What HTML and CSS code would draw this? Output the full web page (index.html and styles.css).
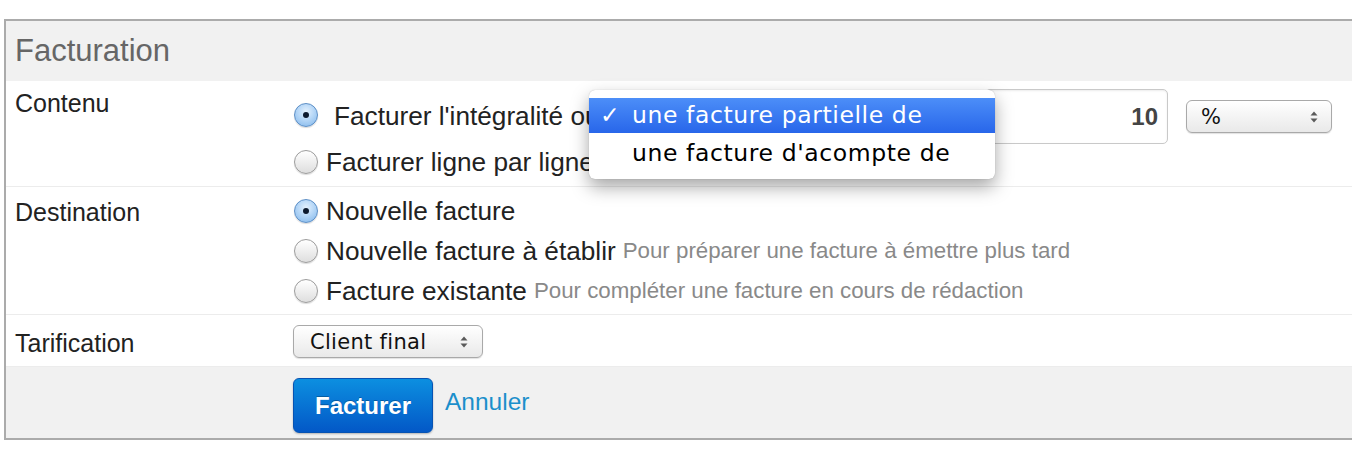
FILE: index.html
```html
<!DOCTYPE html>
<html lang="fr">
<head>
<meta charset="utf-8">
<title>Facturation</title>
<link rel="stylesheet" href="styles.css">
</head>
<body>
<div class="panel">
  <div class="panel-head">Facturation</div>

  <div class="row row-contenu">
    <div class="label">Contenu</div>
    <div class="controls">
      <div class="line line-main">
        <span class="radio checked first"></span>
        <span class="opt">Facturer l'intégralité ou</span>
        <div class="picker">
          <div class="menu">
            <div class="menu-item active"><span class="check">✓</span>une facture partielle de</div>
            <div class="menu-item second"><span class="check"></span>une facture d'acompte de</div>
          </div>
        </div>
        <div class="num">10</div>
        <div class="select select-unit"><span>%</span><svg class="arrows" width="8" height="14" viewBox="0 0 8 14"><path d="M4 1.5 L7.5 5.5 H0.5Z M4 12.5 L7.5 8.5 H0.5Z" fill="#5a5a5a"/></svg></div>
      </div>
      <div class="line line-sub">
        <span class="radio"></span>
        <span class="opt">Facturer ligne par ligne</span>
      </div>
    </div>
  </div>

  <div class="row row-dest">
    <div class="label">Destination</div>
    <div class="controls">
      <div class="line line-dest">
        <span class="radio checked"></span>
        <span class="opt">Nouvelle facture</span>
      </div>
      <div class="line line-dest">
        <span class="radio"></span>
        <span class="opt">Nouvelle facture à établir</span>
        <span class="hint">Pour préparer une facture à émettre plus tard</span>
      </div>
      <div class="line line-dest">
        <span class="radio"></span>
        <span class="opt">Facture existante</span>
        <span class="hint">Pour compléter une facture en cours de rédaction</span>
      </div>
    </div>
  </div>

  <div class="row row-tarif">
    <div class="label">Tarification</div>
    <div class="controls">
      <div class="select select-client"><span>Client final</span><svg class="arrows" width="8" height="14" viewBox="0 0 8 14"><path d="M4 1.5 L7.5 5.5 H0.5Z M4 12.5 L7.5 8.5 H0.5Z" fill="#5a5a5a"/></svg></div>
    </div>
  </div>

  <div class="row footer">
    <div class="label"></div>
    <div class="actions">
      <button class="btn" type="button">Facturer</button>
      <a class="cancel" href="#">Annuler</a>
    </div>
  </div>
</div>
</body>
</html>
```

FILE: styles.css
```css
html, body {
  margin: 0;
  padding: 0;
  overflow: hidden;
  background: #fff;
}

body {
  font-family: "Liberation Sans", Arial, sans-serif;
  color: #222;
}

.panel {
  margin: 19px -20px 0 4px;
  border: 2px solid #ababab;
  border-right: 0;
}

.panel-head {
  height: 60px;
  line-height: 60px;
  background: #f1f1f1;
  padding-left: 9px;
  font-size: 31px;
  color: #666;
}

.row {
  display: grid;
  grid-template-columns: 279px 1fr;
  padding-left: 9px;
  border-bottom: 1px solid #ececec;
}

.label {
  font-size: 25px;
  line-height: 30px;
  color: #222;
}

.row-contenu .label { padding-top: 7px; }
.row-dest .label { padding-top: 10px; }
.row-tarif .label { padding-top: 13px; }

.row-contenu .controls { padding: 8px 0 6px; }
.row-dest .controls { padding: 4px 0 3px; }
.row-tarif .controls { padding: 10px 0 8px; }

.line {
  display: flex;
  align-items: center;
  font-size: 26.2px;
  color: #222;
  white-space: nowrap;
}

.line-main {
  height: 55px;
  padding-right: 40px;
}

.line-sub { height: 36px; }
.line-dest { height: 40px; }

.radio {
  flex: none;
  width: 24px;
  height: 24px;
  box-sizing: border-box;
  border-radius: 50%;
  border: 1px solid #9c9c9c;
  background: linear-gradient(#ffffff, #dedede);
  box-shadow: 0 1px 1px rgba(0, 0, 0, 0.15);
  margin-right: 8px;
  position: relative;
}

.radio.checked {
  border-color: #5d8fc6;
  background: radial-gradient(circle at 50% 35%, #e4f1fd 0%, #b6d7f7 45%, #7fb5ea 100%);
}

.radio.checked::after {
  content: "";
  position: absolute;
  left: 8px;
  top: 8px;
  width: 6px;
  height: 6px;
  border-radius: 50%;
  background: #0d1a2e;
}

.radio.first {
  margin-right: 16px;
  margin-bottom: 4px;
}

.picker {
  flex: 1;
  align-self: stretch;
  position: relative;
}

.menu {
  position: absolute;
  right: -10px;
  top: 1px;
  width: 406px;
  box-sizing: border-box;
  padding: 8px 0 8px;
  background: #fff;
  border-radius: 6px;
  box-shadow: 0 8px 18px rgba(0, 0, 0, 0.35), 0 0 1px rgba(0, 0, 0, 0.3);
  z-index: 2;
  font-family: "DejaVu Sans", Verdana, sans-serif;
  font-size: 23.5px;
  letter-spacing: 0.6px;
}

.menu-item {
  display: flex;
  height: 35px;
  line-height: 34px;
  color: #000;
}

.menu-item.active {
  background: linear-gradient(#4c8ef8, #2866ea);
  color: #fff;
}

.menu-item.second {
  height: 38px;
  line-height: 40px;
}

.check {
  width: 43px;
  padding-left: 11px;
  box-sizing: border-box;
  flex: none;
  font-weight: bold;
}

.num {
  flex: none;
  width: 183px;
  height: 55px;
  box-sizing: border-box;
  border: 1px solid #c9c9c9;
  border-radius: 5px;
  box-shadow: inset 0 1px 2px rgba(0, 0, 0, 0.08);
  text-align: right;
  padding-right: 9px;
  font-weight: bold;
  font-size: 24px;
  line-height: 53px;
  color: #444;
}

.select {
  flex: none;
  display: flex;
  align-items: center;
  justify-content: space-between;
  height: 33px;
  box-sizing: border-box;
  border: 1px solid #a9a9a9;
  border-radius: 6px;
  background: linear-gradient(#ffffff, #e9e9e9);
  box-shadow: 0 1px 1px rgba(0, 0, 0, 0.12);
  font-family: "DejaVu Sans", Verdana, sans-serif;
  font-size: 21px;
  color: #111;
}

.select-unit {
  width: 146px;
  margin-left: 18px;
  padding: 0 13px 0 14px;
}

.select-client {
  width: 190px;
  margin-left: -1px;
  padding: 0 14px 0 16px;
  letter-spacing: 0.3px;
}

.arrows { flex: none; }

.hint {
  font-size: 22.3px;
  color: #898989;
  margin-left: 7px;
}

.footer {
  background: #f1f1f1;
  border-bottom: 0;
  padding-top: 11px;
  padding-bottom: 5px;
}

.actions {
  display: flex;
  align-items: flex-start;
}

.btn {
  width: 140px;
  height: 55px;
  margin-left: -1px;
  box-sizing: border-box;
  border: 1px solid #0753b3;
  border-radius: 6px;
  background: linear-gradient(#0c8fe0, #0358c7);
  box-shadow: 0 1px 2px rgba(0, 0, 0, 0.25);
  color: #fff;
  font-family: "Liberation Sans", Arial, sans-serif;
  font-weight: bold;
  font-size: 24px;
  text-shadow: 0 -1px 0 rgba(0, 0, 0, 0.25);
  padding: 0;
}

.cancel {
  margin-left: 12px;
  padding-top: 9px;
  font-size: 24.5px;
  line-height: 30px;
  color: #1b8fcb;
  text-decoration: none;
}
```
